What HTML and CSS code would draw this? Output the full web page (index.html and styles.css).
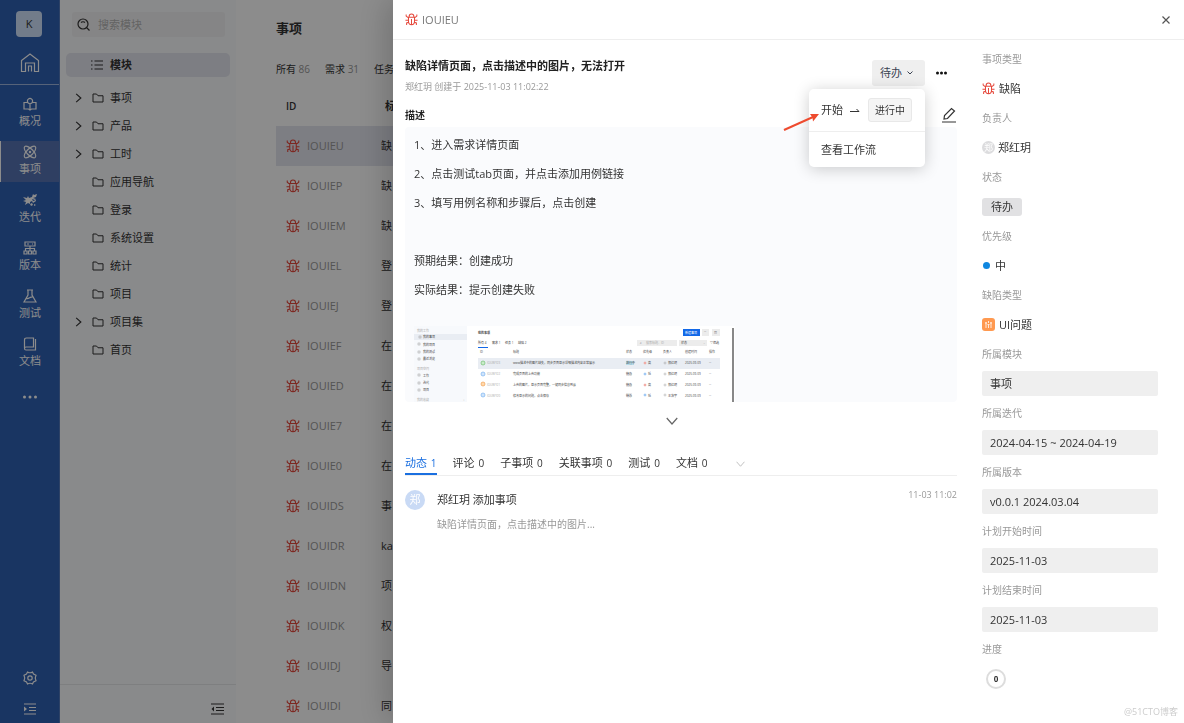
FILE: index.html
```html
<!DOCTYPE html>
<html lang="zh-CN">
<head>
    <meta charset="UTF-8">
    <title>事项</title>
    <meta name="viewport" content="width=device-width, initial-scale=1">
    <link rel="stylesheet" href="styles.css">
</head>
<body>
<!-- 公用图标 -->
<svg class="sprite" aria-hidden="true">
    <symbol id="bug" viewBox="0 0 28 28">
        <path d="M9 9V7c0-3 2-5 5-5s5 2 5 5v2M2.500 3v3.500L5.500 9h17l3-2.500V3M7.500 9v9c0 5 2.500 7.500 6.500 7.500s6.500-2.500 6.500-7.500V9M14 13v12M1 15.500h6.500M20.500 15.500H27M8 20l-4.500 1.500V26M20 20l4.500 1.500V26"/>
    </symbol>
    <symbol id="folder" viewBox="0 0 24 20">
        <path d="M2 2h7l3 3.500h10V18H2z"/>
    </symbol>
    <symbol id="right" viewBox="0 0 12 16">
        <path d="M2 1l8 7-8 7"/>
    </symbol>
    <symbol id="down" viewBox="0 0 16 10">
        <path d="M1 1l7 8 7-8"/>
    </symbol>
</svg>
<div class="app">
    <nav class="rail">
        <a class="logo" href="#">K</a>
        <a class="home" href="#" aria-label="首页">
            <svg class="line" width="20" height="20" viewBox="0 0 20 20"><path d="M1.500 18.500V7.500L10 1l8.500 6.500v11h-4V10h-9v8.500zM8.500 18.500v-5.500h3v5.500"/></svg>
        </a>
        <ul class="menu">
            <li><a href="#">
                <svg class="line" width="14" height="14" viewBox="0 0 14 14"><path d="M4.500 5.500H1v6.500h4.500L7 13l1.500-1H13V5.500H9.500L7 7 4.500 5.500zM7 7v6M5 5.500a2.500 2.500 0 1 1 4 0"/></svg>
                <span>概况</span></a></li>
            <li class="on"><a href="#">
                <svg class="line" width="14" height="14" viewBox="0 0 14 14"><ellipse cx="7" cy="7" rx="7.500" ry="3.200" transform="rotate(45 7 7)"/><ellipse cx="7" cy="7" rx="7.500" ry="3.200" transform="rotate(-45 7 7)"/><circle cx="7" cy="7" r=".6"/></svg>
                <span>事项</span></a></li>
            <li><a href="#">
                <svg class="solid" width="14" height="14" viewBox="0 0 14 14"><path d="M0 4l4 1 1-2 1 2 3-1 1-3 1 1 3-1-1 3-3 1 3 1-1 1-3-1 1 2 3-1v1l-3 2-1-2-2 1v2l-2-1-3 2 1-3-3-1 3-1zM7 11l2-1 1 2-2 1zM11 11l2 1-2 1z"/></svg>
                <span>迭代</span></a></li>
            <li><a href="#">
                <svg class="line" width="14" height="14" viewBox="0 0 14 14"><path d="M2 1h10v4H2zM4 3h2M9 3h1M7 5v5M2.500 10V7.500h9V10M1 10h3v3H1zM5.500 10h3v3h-3zM10 10h3v3h-3z"/></svg>
                <span>版本</span></a></li>
            <li><a href="#">
                <svg class="line" width="14" height="14" viewBox="0 0 14 14"><path d="M4 1h6M5 1v5l-4 7h12L9 6V1M3 9.500c3 1 4-2 7-1.500"/></svg>
                <span>测试</span></a></li>
            <li><a href="#">
                <svg class="line" width="14" height="14" viewBox="0 0 14 14"><path d="M1.500 11V3q0-2 2-2H10.500v9H3q-1.500 0-1.500 1.500T3 13H12.500V2"/></svg>
                <span>文档</span></a></li>
        </ul>
        <a class="more" href="#" aria-label="更多">
            <svg class="solid" width="16" height="4" viewBox="0 0 16 4"><circle cx="2.500" cy="2" r="1.500"/><circle cx="8" cy="2" r="1.500"/><circle cx="13.500" cy="2" r="1.500"/></svg>
        </a>
        <div class="tools">
            <a href="#" aria-label="设置"><svg class="line" width="14" height="14" viewBox="0 0 14 14"><path d="M4.500 1Q7 2.500 9.500 1l1 2 2.500 1.200Q11.500 7 13 9.800L10.500 11l-1 2Q7 11.500 4.500 13l-1-2L1 9.800Q2.500 7 1 4.200L3.500 3z"/><circle cx="7" cy="7" r="2.200"/></svg></a>
            <a href="#" aria-label="展开"><svg class="line" width="12" height="12" viewBox="0 0 12 12"><path d="M0 1h12M5 4.500h7M5 7.500h7M0 11h12"/><path class="full" d="M0 3.500L3 6 0 8.500z"/></svg></a>
        </div>
    </nav>
    <aside class="tree">
        <div class="search">
            <svg class="line" width="13" height="13" viewBox="0 0 13 13"><circle cx="6" cy="6" r="5"/><path d="M9.500 9.500l3 3M4 4.500c1-1 3-1 4 0"/></svg>
            <input type="text" placeholder="搜索模块" aria-label="搜索模块">
        </div>
        <a class="all" href="#">
            <svg class="line" width="12" height="10" viewBox="0 0 12 10"><path d="M3.500 1H12M3.500 5H12M3.500 9H12M0 1h1.500M0 5h1.500M0 9h1.500"/></svg>
            模块
        </a>
        <ul class="nodes">
            <li><svg class="arrow"><use href="#right"/></svg><svg class="folder"><use href="#folder"/></svg><a href="#">事项</a></li>
            <li><svg class="arrow"><use href="#right"/></svg><svg class="folder"><use href="#folder"/></svg><a href="#">产品</a></li>
            <li><svg class="arrow"><use href="#right"/></svg><svg class="folder"><use href="#folder"/></svg><a href="#">工时</a></li>
            <li class="leaf"><svg class="folder"><use href="#folder"/></svg><a href="#">应用导航</a></li>
            <li class="leaf"><svg class="folder"><use href="#folder"/></svg><a href="#">登录</a></li>
            <li class="leaf"><svg class="folder"><use href="#folder"/></svg><a href="#">系统设置</a></li>
            <li class="leaf"><svg class="folder"><use href="#folder"/></svg><a href="#">统计</a></li>
            <li class="leaf"><svg class="folder"><use href="#folder"/></svg><a href="#">项目</a></li>
            <li><svg class="arrow"><use href="#right"/></svg><svg class="folder"><use href="#folder"/></svg><a href="#">项目集</a></li>
            <li class="leaf"><svg class="folder"><use href="#folder"/></svg><a href="#">首页</a></li>
        </ul>
        <div class="fold">
            <button type="button" aria-label="收起"><svg class="line" width="13" height="12" viewBox="0 0 13 12"><path d="M0 1h13M5 4.500h8M5 7.500h8M0 11h13"/><path class="full" d="M3 3.500L.5 6 3 8.500z"/></svg></button>
        </div>
    </aside>
    <main class="main">
        <h1>事项</h1>
        <ul class="filter">
            <li>所有 <em>86</em></li>
            <li>需求 <em>31</em></li>
            <li>任务</li>
        </ul>
        <table class="list">
            <thead><tr><th class="id">ID</th><th>标题</th></tr></thead>
            <tbody>
                <tr class="on"><td><svg class="bug"><use href="#bug"/></svg>IOUIEU</td><td>缺</td></tr>
                <tr><td><svg class="bug"><use href="#bug"/></svg>IOUIEP</td><td>缺</td></tr>
                <tr><td><svg class="bug"><use href="#bug"/></svg>IOUIEM</td><td>缺</td></tr>
                <tr><td><svg class="bug"><use href="#bug"/></svg>IOUIEL</td><td>登</td></tr>
                <tr><td><svg class="bug"><use href="#bug"/></svg>IOUIEJ</td><td>登</td></tr>
                <tr><td><svg class="bug"><use href="#bug"/></svg>IOUIEF</td><td>在</td></tr>
                <tr><td><svg class="bug"><use href="#bug"/></svg>IOUIED</td><td>在</td></tr>
                <tr><td><svg class="bug"><use href="#bug"/></svg>IOUIE7</td><td>在</td></tr>
                <tr><td><svg class="bug"><use href="#bug"/></svg>IOUIE0</td><td>在</td></tr>
                <tr><td><svg class="bug"><use href="#bug"/></svg>IOUIDS</td><td>事</td></tr>
                <tr><td><svg class="bug"><use href="#bug"/></svg>IOUIDR</td><td>ka</td></tr>
                <tr><td><svg class="bug"><use href="#bug"/></svg>IOUIDN</td><td>项</td></tr>
                <tr><td><svg class="bug"><use href="#bug"/></svg>IOUIDK</td><td>权</td></tr>
                <tr><td><svg class="bug"><use href="#bug"/></svg>IOUIDJ</td><td>导</td></tr>
                <tr><td><svg class="bug"><use href="#bug"/></svg>IOUIDI</td><td>同</td></tr>
            </tbody>
        </table>
    </main>
</div>
<div class="mask"></div>
<section class="drawer">
    <header class="bar">
        <svg class="bug"><use href="#bug"/></svg>
        <span>IOUIEU</span>
        <button class="close" type="button" aria-label="关闭"><svg class="line" width="8" height="8" viewBox="0 0 8 8"><path d="M.5.5l7 7M7.500.5l-7 7"/></svg></button>
    </header>
    <div class="body">
        <div class="detail">
            <div class="head">
                <div>
                    <h2>缺陷详情页面，点击描述中的图片，无法打开</h2>
                    <p class="by">郑红玥 创建于 2025-11-03 11:02:22</p>
                </div>
                <div class="actions">
                    <div class="status">
                        <button class="state" type="button">待办 <svg width="6" height="4" viewBox="0 0 6 4"><path d="M.5.5L3 3 5.500.5"/></svg></button>
                        <div class="pop">
                            <a class="flow" href="#">开始
                                <svg class="thin" width="10" height="6" viewBox="0 0 10 6"><path d="M0 4.500h9L6.500 2"/></svg>
                                <span class="tag">进行中</span>
                            </a>
                            <a class="view" href="#">查看工作流</a>
                        </div>
                        <svg class="pointer" width="38" height="20" viewBox="0 0 38 20"><path class="shaft" d="M1 18L30 5"/><path class="tip" d="M36 2L27 2l2.500 3.500.5 4z"/></svg>
                    </div>
                    <button class="dots" type="button" aria-label="更多操作"><svg class="solid" width="11" height="4" viewBox="0 0 11 4"><circle cx="1.500" cy="2" r="1.500"/><circle cx="5.500" cy="2" r="1.500"/><circle cx="9.500" cy="2" r="1.500"/></svg></button>
                </div>
            </div>
            <div class="sub">
                <h3>描述</h3>
                <button type="button" aria-label="编辑"><svg class="line" width="14" height="16" viewBox="0 0 14 16"><path d="M2 12l.5-3.500L9.500 1.500l3 2.500-7 7.500zM0 15h14"/></svg></button>
            </div>
            <div class="desc">
                <p>1、进入需求详情页面</p>
                <p>2、点击测试tab页面，并点击添加用例链接</p>
                <p>3、填写用例名称和步骤后，点击创建</p>
                <p>&nbsp;</p>
                <p>预期结果：创建成功</p>
                <p>实际结果：提示创建失败</p>
                <!-- 附件缩略图 -->
                <svg class="thumb" width="321" height="76" viewBox="0 0 321 76">
                    <rect class="paper" width="321" height="76"/>
                    <rect class="side" width="53" height="76"/>
                    <rect class="hover" y="8" width="53" height="6"/>
                    <rect class="hover" x="64" y="32" width="242" height="11"/>
                    <g class="mute">
                        <text x="3" y="6">我的工作</text><text x="3" y="44">项目空间</text><text x="3" y="75">我的收藏</text><text x="49" y="75">+</text>
                        <text x="73" y="38">IOUWY23</text><text x="73" y="49">IOUWY22</text><text x="73" y="60">IOUWY21</text><text x="73" y="71">IOUWY20</text>
                    </g>
                    <g class="icons">
                        <rect x="5" y="10" width="2" height="2"/><rect x="4" y="17" width="2" height="2"/><rect x="4" y="25" width="2" height="2"/><rect x="4" y="32" width="2" height="2"/>
                        <rect x="4" y="48" width="2" height="2"/><rect x="4" y="56" width="2" height="2"/><rect x="4" y="63" width="2" height="2"/>
                        <circle cx="251" cy="37" r="1"/><circle cx="251" cy="48" r="1"/><circle cx="251" cy="59" r="1"/><circle cx="251" cy="69" r="1"/>
                    </g>
                    <text x="9" y="12">我的事项</text><text x="9" y="20">我的项目</text><text x="9" y="27">我的测试</text><text x="9" y="34">最近浏览</text>
                    <text x="9" y="51">工作</text><text x="9" y="58">迭代</text><text x="9" y="65">项目</text>
                    <text class="bold" x="64" y="8">我的事项</text>
                    <rect class="blue" x="269" y="3" width="17" height="7"/><text class="white" x="271" y="8">新建事项</text>
                    <rect class="gray" x="288" y="3" width="7" height="7"/><text x="290" y="7">···</text>
                    <rect class="gray" x="298" y="3" width="8" height="7"/><text x="300" y="8">▦</text>
                    <text x="64" y="18">所有 4</text><text x="78" y="18">需求 1</text><text x="91" y="18">任务 1</text><text x="104" y="18">缺陷 2</text>
                    <rect class="blue" x="64" y="21" width="10" height="1"/>
                    <rect class="gray" x="223" y="14" width="40" height="6"/><text x="226" y="18">⌕</text><text class="mute" x="232" y="18">搜索标题、ID</text>
                    <rect class="gray" x="265" y="14" width="28" height="6"/><text x="267" y="18">状态</text><text class="mute" x="289" y="18">⌄</text><text x="296" y="18">▽筛选</text>
                    <text x="66" y="27">ID</text><text x="99" y="27">标题</text><text x="212" y="27">状态</text><text x="229" y="27">优先级</text><text x="249" y="27">负责人</text><text x="271" y="27">创建时间</text><text x="295" y="27">操作</text>
                    <circle class="dot green" cx="69" cy="37" r="2"/><circle class="dot" cx="69" cy="48" r="2"/><circle class="dot orange" cx="69" cy="58" r="2"/><circle class="dot" cx="69" cy="69" r="2"/>
                    <text x="99" y="38">www描述中的图片缺失，同步页面显示详细描述内容正常展示</text>
                    <text x="99" y="49">完成页面的上传功能</text>
                    <text x="99" y="60">上传的图片，显示页面完整，一键同步信息到云</text>
                    <text x="99" y="71">修改显示的问题，点击保存</text>
                    <rect class="teal" x="212" y="35" width="8" height="4"/><rect class="gray" x="212" y="46" width="6" height="4"/><rect class="gray" x="212" y="57" width="6" height="4"/><rect class="gray" x="212" y="67" width="6" height="4"/>
                    <text x="212" y="38">进行中</text><text x="212" y="49">待办</text><text x="212" y="60">待办</text><text x="212" y="71">待办</text>
                    <circle class="dot red" cx="231" cy="37" r="1"/><circle class="dot" cx="231" cy="48" r="1"/><circle class="dot red" cx="231" cy="59" r="1"/><circle class="dot" cx="231" cy="69" r="1"/>
                    <text x="234" y="38">高</text><text x="234" y="49">低</text><text x="234" y="60">高</text><text x="234" y="71">低</text>
                    <text x="254" y="38">郑红玥</text><text x="254" y="49">郑红玥</text><text x="254" y="60">郑红玥</text><text x="254" y="71">王浩宇</text>
                    <text x="271" y="38">2025-09-09</text><text x="271" y="49">2025-09-09</text><text x="271" y="60">2025-09-09</text><text x="271" y="71">2025-09-09</text>
                    <text x="295" y="38">···</text><text x="295" y="49">···</text><text x="295" y="60">···</text><text x="295" y="71">···</text>
                    <rect class="scroll" x="318" y="2" width="2" height="74"/>
                </svg>
            </div>
            <button class="expand" type="button" aria-label="展开描述"><svg width="12" height="8"><use href="#down"/></svg></button>
            <ul class="tabs">
                <li class="on"><a href="#">动态 <em>1</em></a></li>
                <li><a href="#">评论 <em>0</em></a></li>
                <li><a href="#">子事项 <em>0</em></a></li>
                <li><a href="#">关联事项 <em>0</em></a></li>
                <li><a href="#">测试 <em>0</em></a></li>
                <li><a href="#">文档 <em>0</em></a></li>
                <li class="rest"><button type="button" aria-label="更多标签"><svg width="9" height="6"><use href="#down"/></svg></button></li>
            </ul>
            <div class="log">
                <span class="face">郑</span>
                <div class="what">
                    <p>郑红玥 添加事项</p>
                    <p class="text">缺陷详情页面，点击描述中的图片...</p>
                </div>
                <time>11-03 11:02</time>
            </div>
        </div>
        <div class="props">
            <div class="field">
                <span class="label">事项类型</span>
                <div class="value"><svg class="bug"><use href="#bug"/></svg>缺陷</div>
            </div>
            <div class="field">
                <span class="label">负责人</span>
                <div class="value"><span class="face small">郑</span>郑红玥</div>
            </div>
            <div class="field">
                <span class="label">状态</span>
                <div class="value"><span class="badge">待办</span></div>
            </div>
            <div class="field">
                <span class="label">优先级</span>
                <div class="value"><i class="level"></i>中</div>
            </div>
            <div class="field">
                <span class="label">缺陷类型</span>
                <div class="value"><svg class="kind" width="13" height="13" viewBox="0 0 13 13"><rect width="13" height="13" rx="3"/><path d="M4 4v6M6.500 3v2M6.500 7v3M9 4v6M3 5h2M5.500 6.500h2M8 5h2"/></svg>UI问题</div>
            </div>
            <div class="field">
                <label class="label" for="module">所属模块</label>
                <input id="module" type="text" value="事项">
            </div>
            <div class="field">
                <label class="label" for="sprint">所属迭代</label>
                <input id="sprint" type="text" value="2024-04-15 ~ 2024-04-19">
            </div>
            <div class="field">
                <label class="label" for="version">所属版本</label>
                <input id="version" type="text" value="v0.0.1 2024.03.04">
            </div>
            <div class="field">
                <label class="label" for="start">计划开始时间</label>
                <input id="start" type="text" value="2025-11-03">
            </div>
            <div class="field">
                <label class="label" for="end">计划结束时间</label>
                <input id="end" type="text" value="2025-11-03">
            </div>
            <div class="field">
                <span class="label">进度</span>
                <div class="value"><span class="ring">0</span></div>
            </div>
        </div>
    </div>
</section>
<div class="watermark">@51CTO博客</div>
</body>
</html>
```
FILE: styles.css
```css
*{margin:0;padding:0;box-sizing:border-box;}
body{font:11px/20px "Open Sans","Noto Sans CJK SC",sans-serif;color:#333;background:#fff;overflow:hidden;}
ul,li{list-style:none;}
a{color:inherit;text-decoration:none;}
em,i{font-style:normal;}
button{border:0;background:none;color:inherit;font:inherit;cursor:pointer;}
input{border:0;outline:0;background:none;color:inherit;font:inherit;}
svg{flex:none;fill:none;stroke:currentColor;stroke-width:2;}
svg.line{stroke-width:1.2;}
svg.thin,.state svg{stroke-width:1;}
svg.solid{fill:currentColor;stroke:none;}
.full{fill:currentColor;stroke:none;}
.sprite{position:absolute;width:0;height:0;}
svg.bug{width:14px;height:14px;color:#e5483c;stroke-width:2.2;}

.app{display:flex;height:100vh;}

/* 左侧导航 */
.rail{display:flex;flex-direction:column;width:60px;flex:none;background:#2f61b3;color:#fff;border-right:1px solid #5279ba;}
.logo{width:26px;height:26px;margin:11px auto 0 16px;border-radius:4px;background:#cfe2fb;color:#333;line-height:26px;text-align:center;}
.home{display:flex;justify-content:center;height:48px;padding-top:16px;border-bottom:1px solid #9db4dc;}
.menu{padding-top:8px;}
.menu li{height:41px;margin-bottom:7px;border-left:1px solid transparent;}
.menu li.on{background:#5674b3;border-left-color:#fff;}
.menu a{display:flex;flex-direction:column;align-items:center;padding-top:4px;}
.more{display:flex;justify-content:center;padding-top:14px;}
.tools{display:flex;flex-direction:column;align-items:center;gap:18px;margin-top:auto;padding-bottom:8px;}
.tools a{display:flex;}

/* 模块树 */
.tree{display:flex;flex-direction:column;width:176px;flex:none;background:#fafbfd;}
.search{display:flex;align-items:center;gap:8px;height:25px;margin:12px 11px 16px 12px;padding:0 5px;border-radius:3px;background:#f3f3f4;}
.search input{width:100%;min-width:0;}
.search input::placeholder{color:#b5b5b5;}
.all{display:flex;align-items:center;gap:7px;height:24px;margin:0 6px 7px;padding-left:25px;border-radius:5px;background:#e3e5ee;font-weight:bold;}
.nodes li{display:flex;align-items:center;height:28px;padding-left:15px;}
.nodes li.leaf{padding-left:32px;}
.arrow{width:7px;height:10px;margin-right:10px;}
.folder{width:12px;height:10px;margin-right:6px;}
.fold{display:flex;justify-content:flex-end;align-items:center;height:39px;margin-top:auto;padding:10px 12px 0 0;border-top:1px solid #e6e7ea;}
.fold button{display:flex;}

/* 事项列表 */
.main{flex:1;min-width:0;padding-left:40px;}
.main h1{padding-top:18px;font-size:13px;line-height:20px;}
.filter{display:flex;gap:15px;padding:21px 0 16px;font-size:10px;white-space:nowrap;}
.filter em{color:#999;}
.list{width:100%;border-collapse:collapse;table-layout:fixed;}
.list th{height:31px;padding-bottom:9px;padding-left:4px;font-size:11px;text-align:left;}
.list th.id{width:105px;padding-left:10px;font-size:10px;font-weight:600;}
.list td{height:40px;white-space:nowrap;}
.list td:first-child{padding-left:10px;color:#999;}
.list td .bug{margin:-3px 7px 0 0;vertical-align:middle;}
.list tr.on{background:#e3e5ee;}

.mask{position:fixed;inset:0;background:rgba(0,0,0,.45);}

/* 详情抽屉 */
.drawer{position:fixed;top:0;right:0;bottom:0;left:393px;background:#fff;box-shadow:-6px 0 30px rgba(0,0,0,.2);}
.drawer .bug{width:13px;height:13px;}
.bar{display:flex;align-items:center;gap:4px;height:40px;padding:0 13px 0 12px;border-bottom:1px solid #eee;color:#777;}
.close{display:flex;margin-left:auto;padding:1px;color:#555;}
.body{display:flex;gap:25px;padding:9px 26px 0 12px;}
.detail{flex:1;min-width:0;padding-top:7px;}
.head{display:flex;justify-content:space-between;height:49px;}
.head h2{font-size:11px;line-height:20px;color:#222;}
.by{font-size:9px;line-height:22px;color:#999;}
.actions{display:flex;align-items:flex-start;padding-top:4px;}
.status{position:relative;}
.state{display:flex;align-items:center;gap:5px;height:26px;padding:0 12px 0 8px;border-radius:3px;background:#efefef;color:#3a4252;}
.dots{display:flex;padding:11px 10px 11px 11px;color:#111;}
.pop{position:absolute;top:29px;right:0;z-index:2;width:116px;border-radius:5px;background:#fff;box-shadow:0 2px 16px rgba(0,0,0,.2);}
.pop a{display:flex;align-items:center;padding:0 12px;white-space:nowrap;}
.flow{gap:7px;height:43px;border-bottom:1px solid #eee;}
.tag{height:24px;margin-left:1px;padding:0 6px;border:1px solid #e8e8e8;border-radius:3px;background:#f5f5f5;font-size:10px;line-height:22px;}
.view{height:35px;}
.pointer{position:absolute;top:52px;right:104px;z-index:3;}
.shaft{stroke:#ee4b2f;stroke-width:2;}
.tip{fill:#ee4b2f;stroke:none;}
.sub{display:flex;justify-content:space-between;height:22px;}
.sub h3{font-size:10px;color:#222;}
.sub button{display:flex;padding:2px 1px;}
.desc{padding:3px 9px 0;border-radius:4px;background:#fafbfd;}
.desc p{line-height:29px;}
.thumb{display:block;max-width:100%;margin-top:22px;stroke:none;fill:#444;font-size:3px;}
.thumb .paper{fill:#fff;}
.thumb .side{fill:#f7f9fc;}
.thumb .hover{fill:#e9edf3;}
.thumb .mute{fill:#aaa;}
.thumb .icons{fill:none;stroke:#888;stroke-width:.4;}
.thumb .bold{font-weight:bold;}
.thumb .blue{fill:#1268e8;}
.thumb .white{fill:#fff;}
.thumb .gray{fill:#ececec;}
.thumb .teal{fill:#b5dbe8;}
.thumb .dot{fill:#cfe4fb;stroke:#69a9ef;stroke-width:.6;}
.thumb .green{fill:#c9ebc9;stroke:#62b862;}
.thumb .orange{fill:#ffd9ad;stroke:#f0963c;}
.thumb .red{fill:#f9c5c0;stroke:#ef8a80;}
.thumb .scroll{fill:#888;}
.expand{display:flex;justify-content:center;align-items:center;width:100%;height:38px;padding-right:18px;color:#666;}
.expand svg,.rest svg{stroke-width:1.6;}
.tabs{display:flex;gap:16px;height:36px;padding-top:13px;border-bottom:1px solid #eee;white-space:nowrap;}
.tabs em{margin-left:1px;font-size:10px;}
.tabs li{height:22px;border-bottom:2px solid transparent;}
.tabs a{display:block;line-height:20px;}
.tabs .on{color:#1a6fe0;border-bottom-color:#1a6fe0;}
.tabs .rest{padding-left:13px;color:#bbb;}
.log{display:flex;gap:12px;padding-top:14px;}
.face{width:20px;height:20px;flex:none;border-radius:50%;background:#c9daf5;color:#fff;text-align:center;}
.small{width:13px;height:13px;background:#dcdcde;font-size:9px;line-height:13px;}
.what{flex:1;}
.text{margin-top:4px;font-size:10px;color:#999;}
.log time{font-size:9px;line-height:10px;color:#999;}

/* 右侧属性 */
.props{width:176px;flex:none;}
.field{height:59px;}
.label{display:block;margin-bottom:7px;font-size:10px;line-height:20px;color:#999;}
.value{display:flex;align-items:center;gap:4px;height:25px;}
.value .small{margin-right:-1px;}
.field input{display:block;width:100%;height:25px;padding:0 8px 1px;border-radius:2px;background:#efefef;}
.badge{height:18px;padding:0 9px;border-radius:3px;background:#e1e1e3;line-height:18px;}
.level{width:7px;height:7px;margin:0 1px;border-radius:50%;background:#0f87e0;}
.kind{stroke:none;fill:#ff9950;}
.kind path{stroke:#fff;stroke-width:.8;}
.ring{width:20px;height:20px;margin-left:4px;border:2px solid #ddd;border-radius:50%;font-size:8px;font-weight:bold;line-height:16px;text-align:center;}

.watermark{position:fixed;right:6px;bottom:1px;font-size:9px;color:#ccc;}
```
